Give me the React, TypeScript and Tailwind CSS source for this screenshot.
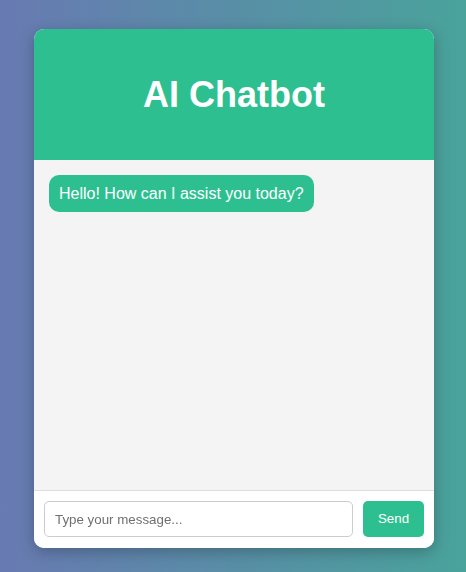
export default function App() {
  return (
    <div
      className="w-[466px] h-[572px] pt-[29px] pl-[34px]"
      style={{ fontFamily: '"Liberation Sans", Arial, sans-serif' }}
    >
      <div className="fixed inset-0 -z-10 bg-[linear-gradient(to_right,#687ab2,#49a39b)]" />
      <div className="w-[400px] h-[519px] rounded-[10px] overflow-hidden bg-white shadow-[0_4px_15px_rgba(0,0,0,0.25)] flex flex-col">
        <div className="h-[131px] bg-[#2ebf91] flex items-center justify-center">
          <h1 className="text-[36px] font-bold text-white leading-none">AI Chatbot</h1>
        </div>
        <div className="h-[330px] bg-[#f4f4f4] p-[15px]">
          <div className="inline-block bg-[#2ebf91] text-white text-[16px] leading-[17px] px-[10px] py-[10px] rounded-[10px]">
            Hello! How can I assist you today?
          </div>
        </div>
        <div className="flex-1 border-t border-[#dddddd] bg-white p-[10px] flex gap-[10px]">
          <input
            className="w-[309px] h-[36px] border border-[#cccccc] rounded-[5px] px-[10px] text-[13.33px] outline-none placeholder:text-[#707070]"
            placeholder="Type your message..."
            style={{ fontFamily: '"Liberation Sans", Arial, sans-serif' }}
          />
          <button className="w-[61px] h-[36px] bg-[#2ebf91] text-white rounded-[5px] text-[13.33px]">
            Send
          </button>
        </div>
      </div>
    </div>
  );
}
